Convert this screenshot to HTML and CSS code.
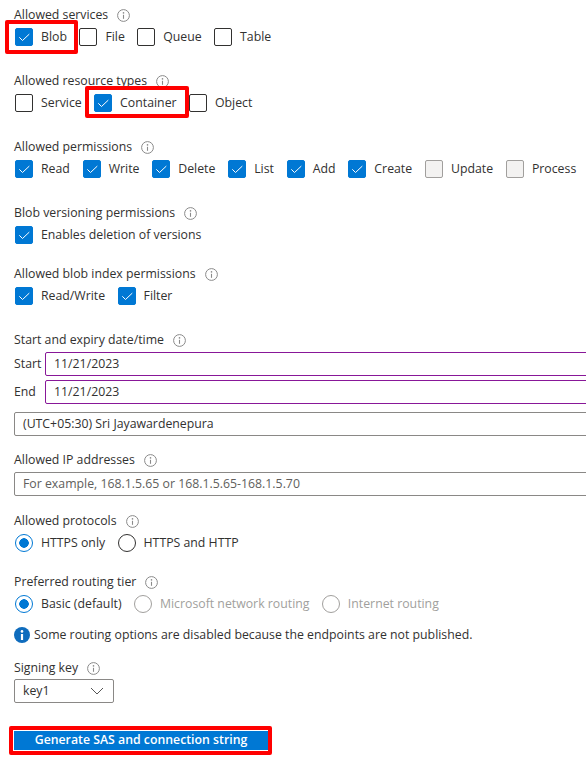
FILE: index.html
```html
<!DOCTYPE html>
<html lang="en">
<head>
<meta charset="utf-8">
<title>Shared access signature</title>
<link rel="stylesheet" href="styles.css">
</head>
<body>
<svg class="defs" width="0" height="0" aria-hidden="true">
  <symbol id="info" viewBox="0 0 13 13">
    <circle cx="6.5" cy="6.5" r="5.9" fill="none" stroke="#8a8a8a" stroke-width="1"/>
    <circle cx="6.5" cy="3.9" r=".8" fill="#8a8a8a"/>
    <path d="M6.5 5.8v4" stroke="#8a8a8a" stroke-width="1.1" fill="none"/>
  </symbol>
  <symbol id="check" viewBox="0 0 16 16">
    <path d="M3.3 8.3l3.2 3.2 6.8-6.4" fill="none" stroke="#fff" stroke-width="1"/>
  </symbol>
</svg>
<main class="form">
  <section class="group g-services">
    <div class="label">Allowed services <svg class="info"><use href="#info"/></svg></div>
    <div class="row">
      <span class="opt mark mark-blob"><span class="box on"><svg class="tick"><use href="#check"/></svg></span>Blob</span>
      <span class="opt"><span class="box"></span>File</span>
      <span class="opt"><span class="box"></span>Queue</span>
      <span class="opt"><span class="box"></span>Table</span>
    </div>
  </section>
  <section class="group g-resources">
    <div class="label">Allowed resource types <svg class="info"><use href="#info"/></svg></div>
    <div class="row">
      <span class="opt"><span class="box"></span>Service</span>
      <span class="opt mark mark-container"><span class="box on"><svg class="tick"><use href="#check"/></svg></span>Container</span>
      <span class="opt"><span class="box"></span>Object</span>
    </div>
  </section>
  <section class="group g-perms">
    <div class="label">Allowed permissions <svg class="info"><use href="#info"/></svg></div>
    <div class="row">
      <span class="opt"><span class="box on"><svg class="tick"><use href="#check"/></svg></span>Read</span>
      <span class="opt"><span class="box on"><svg class="tick"><use href="#check"/></svg></span>Write</span>
      <span class="opt"><span class="box on"><svg class="tick"><use href="#check"/></svg></span>Delete</span>
      <span class="opt"><span class="box on"><svg class="tick"><use href="#check"/></svg></span>List</span>
      <span class="opt"><span class="box on"><svg class="tick"><use href="#check"/></svg></span>Add</span>
      <span class="opt"><span class="box on"><svg class="tick"><use href="#check"/></svg></span>Create</span>
      <span class="opt"><span class="box off"></span>Update</span>
      <span class="opt"><span class="box off"></span>Process</span>
    </div>
  </section>
  <section class="group g-version">
    <div class="label">Blob versioning permissions <svg class="info"><use href="#info"/></svg></div>
    <div class="row">
      <span class="opt"><span class="box on"><svg class="tick"><use href="#check"/></svg></span>Enables deletion of versions</span>
    </div>
  </section>
  <section class="group g-index">
    <div class="label">Allowed blob index permissions <svg class="info"><use href="#info"/></svg></div>
    <div class="row">
      <span class="opt"><span class="box on"><svg class="tick"><use href="#check"/></svg></span>Read/Write</span>
      <span class="opt"><span class="box on"><svg class="tick"><use href="#check"/></svg></span>Filter</span>
    </div>
  </section>
  <section class="group g-dates">
    <div class="label">Start and expiry date/time <svg class="info"><use href="#info"/></svg></div>
    <div class="date-row"><span class="date-label">Start</span><div class="field date">11/21/2023</div></div>
    <div class="date-row"><span class="date-label">End</span><div class="field date">11/21/2023</div></div>
    <div class="field zone">(UTC+05:30) Sri Jayawardenepura</div>
  </section>
  <section class="group g-ip">
    <div class="label">Allowed IP addresses <svg class="info"><use href="#info"/></svg></div>
    <div class="field hint">For example, 168.1.5.65 or 168.1.5.65-168.1.5.70</div>
  </section>
  <section class="group g-proto">
    <div class="label">Allowed protocols <svg class="info"><use href="#info"/></svg></div>
    <div class="row">
      <span class="opt"><span class="radio sel"></span>HTTPS only</span>
      <span class="opt"><span class="radio"></span>HTTPS and HTTP</span>
    </div>
  </section>
  <section class="group g-routing">
    <div class="label">Preferred routing tier <svg class="info"><use href="#info"/></svg></div>
    <div class="row">
      <span class="opt"><span class="radio sel"></span>Basic (default)</span>
      <span class="opt dim"><span class="radio"></span>Microsoft network routing</span>
      <span class="opt dim"><span class="radio"></span>Internet routing</span>
    </div>
    <div class="notice">
      <svg class="notice-icon" viewBox="0 0 16 16"><circle cx="8" cy="8" r="8" fill="#0f6cbd"/><circle cx="8" cy="4.4" r="1.3" fill="#fff"/><path d="M8 7v6" stroke="#fff" stroke-width="2.2"/></svg>
      <span>Some routing options are disabled because the endpoints are not published.</span>
    </div>
  </section>
  <section class="group g-key">
    <div class="label">Signing key <svg class="info"><use href="#info"/></svg></div>
    <div class="select">key1<svg class="chev" viewBox="0 0 14 8"><path d="M1 1l6 6 6-6" fill="none" stroke="#555" stroke-width="1"/></svg></div>
  </section>
  <div class="action mark"><span class="button">Generate SAS and connection string</span></div>
</main>
</body>
</html>
```
FILE: styles.css
```css
html, body {
  margin: 0;
  padding: 0;
  background: #fff;
  overflow: hidden;
}
body {
  width: 586px;
  height: 771px;
  font-family: "Open Sans", "Noto Sans", sans-serif;
  font-size: 12.3px;
  line-height: 18px;
  color: #323130;
}
.defs { position: absolute; }
.form {
  box-sizing: border-box;
  width: 586px;
  height: 771px;
  overflow: hidden;
  padding: 6px 0 0 14px;
}
.group { margin: 0; }
.g-services, .g-resources, .g-perms { height: 66px; }
.g-version { height: 61px; }
.g-index { height: 66px; }
.g-dates { height: 120px; }
.g-ip { height: 61px; }
.g-proto { height: 61px; }
.g-routing { height: 86px; }
.g-key { height: 67px; }
.label {
  display: flex;
  align-items: center;
  gap: 9px;
  height: 18px;
}
.info { width: 13px; height: 13px; }
.row {
  display: flex;
  gap: 12.4px;
  margin: 4px 0 0 1px;
  white-space: nowrap;
}
.g-perms .row { gap: 12.8px; }
.opt {
  display: flex;
  align-items: center;
  gap: 8px;
  position: relative;
}
.box {
  width: 18px;
  height: 18px;
  box-sizing: border-box;
  border: 1px solid #323130;
  border-radius: 2px;
  flex: none;
}
.box.on { background: #0078d4; border-color: #0078d4; }
.box.off { background: #f3f2f1; border-color: #a19f9d; }
.tick { display: block; width: 16px; height: 16px; }
.radio {
  width: 18px;
  height: 18px;
  box-sizing: border-box;
  border: 1px solid #323130;
  border-radius: 50%;
  flex: none;
}
.radio.sel {
  border-color: #0078d4;
  background: radial-gradient(circle, #0078d4 0 4.5px, #fff 5px);
}
.dim { color: #a19f9d; }
.dim .radio { border-color: #a19f9d; }
.mark::after {
  content: "";
  position: absolute;
  border: 4px solid #f00;
  border-radius: 2px;
  box-sizing: border-box;
  pointer-events: none;
}
.mark-blob::after { left: -10px; top: -8px; width: 73px; height: 34px; }
.mark-container::after { left: -9px; top: -8px; width: 104px; height: 32px; }
.date-row {
  display: flex;
  align-items: center;
  height: 24px;
  margin-top: 4px;
}
.label + .date-row { margin-top: 3px; }
.date-label { width: 31px; flex: none; }
.field {
  box-sizing: border-box;
  height: 24px;
  width: 620px;
  padding: 0 8px;
  border: 1px solid #8a8886;
  border-radius: 2px;
  display: flex;
  align-items: center;
}
.date { border-color: #881798; flex: none; }
.zone { margin-top: 8px; }
.g-ip .field { margin-top: 3px; }
.hint { color: #605e5c; }
.notice {
  display: flex;
  align-items: center;
  gap: 4px;
  margin-top: 13px;
  white-space: nowrap;
}
.notice-icon { width: 16px; height: 16px; flex: none; }
.select {
  box-sizing: border-box;
  width: 100px;
  height: 24px;
  margin-top: 2px;
  padding: 0 8px;
  border: 1px solid #8a8886;
  border-radius: 2px;
  display: flex;
  align-items: center;
  justify-content: space-between;
}
.chev { width: 14px; height: 8px; margin-right: 1px; }
.action {
  position: relative;
  width: 254px;
  height: 19px;
  margin-top: 5px;
}
.button {
  display: block;
  height: 19px;
  line-height: 18px;
  background: #0078d4;
  color: #fff;
  font-weight: 600;
  text-align: center;
}
.action::after { left: -5px; top: -5px; width: 263px; height: 29px; }
```
